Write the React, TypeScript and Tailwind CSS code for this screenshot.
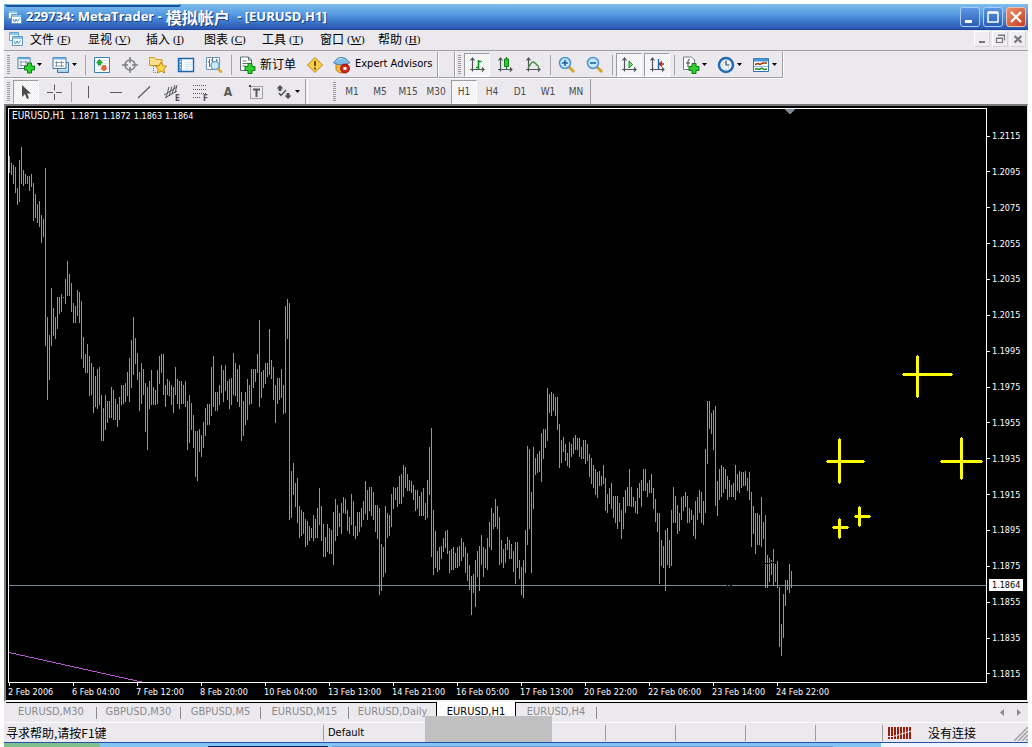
import type { ReactNode } from 'react';

type Segment = { start: number; base: number; ranges: string };

// High/low extents of every bar, in thirds of a pixel below the base row.
const segments: Segment[] = [
  {
    start: 0,
    base: 21,
    ranges:
      '78-129 99-135 105-162 111-189 174-225 90-216 51-162 120-168 132-162 138-162 138-183 132-171 159-273 192-264 222-279 213-291 255-339 267-321 114-648 561-810 615-750 474-648 534-618 561-627 501-597 501-552 492-546 501-504 447-522 393-498 432-498 459-546 519-579 528-579 480-558 486-579 513-687 621-714 672-729 642-729 678-798 699-795 711-849 738-831 717-837 711-825 795-933 834-933 795-900 813-879 813-864 771-864 780-870 807-870 822-891 801-870 765-825 765-822 759-816 726-798 684-816 630-774 561-735 624-702 669-750 726-843 699-822 717-795 759-906 771-960 753-837 720-825 771-825 780-825 720-822 678-762 672-729 672-795 765-831 747-795 753-798 765-825 771-849 711-795 747-822 753-837 753-822 765-822 753-831 813-960 795-939 819-900 855-954 903-1041 903-1053 897-966 915-981 876-954 834-918 822-885 822-885 711-858 678-831 786-843 786-843 765-825 705-789 720-816 705-783 753-810 747-837 744-825 669-795 699-798 717-816 705-831 786-933 813-918 786-885 747-870 765-825 717-822 717-774 717-756 672-729',
  },
  {
    start: 125,
    base: 171,
    ranges:
      '120-381 276-354 270-324 249-312 249-291 147-285 240-297 261-360 315-429 294-372 294-360 267-354 315-402 78-399 57-177 69-720 573-714 549-645 609-681 594-729 678-774 690-768 696-762 717-801 723-795 738-783 744-774 705-783 717-774 684-774 624-735 678-783 732-831 771-831 732-816 744-822 750-822 696-855 657-783 675-768 699-741 669-762 651-699 657-702 690-753 711-762 642-735 663-768 738-777 696-768 696-756 684-741 663-720 603-702 630-720 621-693 621-708 636-720 675-756 675-777 684-945 792-933 801-891 678-879 699-774 705-768 642-741 621-687 624-660 621-681 588-672 582-672 555-651 561-624 582-633 600-633 603-639 615-660 630-693 630-687 648-708 636-708 624-708 669-720 600-714 501-645 444-831 690-885 753-864 813-876 801-870 798-837 774-816 753-804 750-822 813-879 807-870 801-870 819-864 801-864 798-858 774-843 786-831 801-879 819-903 855-930 888-1005 882-939 840-981 813-891 798-933',
  },
  {
    start: 236,
    base: 261,
    ranges:
      '495-585 531-621 537-594 504-600 456-531 414-540 429-477 387-471 408-477 441-585 510-579 537-594 522-579 501-540 510-567 522-567 543-606 516-642 516-594 570-627 591-675 570-684 480-609 228-525 237-477 366-609 231-417 264-315 252-309 243-306 189-336 177-267 177-234 54-213 72-129 66-138 72-123 81-138 81-180 162-294 210-279 201-246 222-273 249-288 216-294 222-261 204-252 195-240 204-240 204-261 231-267 210-267 210-282 222-273 252-321 264-342 285-354 297-375 306-384 303-348 318-348 285-342 324-423 372-429 354-402 339-417 378-444 378-459 378-477 399-456 420-507 381-477 360-429 351-408 297-408 351-411 381-411 393-429 354-432 339-384 330-411 297-363 297-363 339-381 330-369 312-369 354-417 387-456 429-486 429-642 510-588 528-594 480-663 474-585 510-594 420-588 351-459 378-459 405-492 429-483 381-450 378-423 366-411 378-459 414-459 420-450 435-498 393-507 381-450 360-429 366-459 393-465 237-429 93-282 93-177 129-192 120-240 108-408 333-438 297-390 285-381 291-369 297-357 318-390 330-381 345-381 339-381 285-390 312-363 303-369 306-354 306-348 303-348 324-363 306-390 366-531 408-492 429-552 429-525 435-525 381-531 456-507 435-654 555-654 564-636 570-615 537-648 582-636 573-654 651-831 762-858 672-804 630-708 630-660 582-669 603-654',
  },
];

const barPath = segments
  .map(({ start, base, ranges }) =>
    ranges
      .split(' ')
      .map((range, i) => {
        const [top, bottom] = range.split('-').map(Number);
        return `M${(start + i) * 2} ${base + top / 3}h1v${(bottom - top) / 3}h-1z`;
      })
      .join(''),
  )
  .join('');

const crosses = [
  { x: 908, y: 265, left: 893, right: 944, top: 246, bottom: 289 },
  { x: 830, y: 352, left: 817, right: 856, top: 329, bottom: 375 },
  { x: 952, y: 352, left: 931, right: 974, top: 328, bottom: 371 },
  { x: 850, y: 407, left: 845, right: 862, top: 397, bottom: 418 },
  { x: 830, y: 418, left: 823, right: 840, top: 409, bottom: 430 },
];

const quotes = ['1.1871', '1.1872', '1.1863', '1.1864'];

const prices = [
  '1.2115', '1.2095', '1.2075', '1.2055', '1.2035', '1.2015', '1.1995', '1.1975',
  '1.1955', '1.1935', '1.1915', '1.1895', '1.1875', '1.1855', '1.1835', '1.1815',
];

const times = [
  '2 Feb 2006', '6 Feb 04:00', '7 Feb 12:00', '8 Feb 20:00', '10 Feb 04:00', '13 Feb 13:00', '14 Feb 21:00',
  '16 Feb 05:00', '17 Feb 13:00', '20 Feb 22:00', '22 Feb 06:00', '23 Feb 14:00', '24 Feb 22:00',
];

const menus = [
  ['文件', 'F'], ['显视', 'V'], ['插入', 'I'], ['图表', 'C'], ['工具', 'T'], ['窗口', 'W'], ['帮助', 'H'],
];

const frames = ['M1', 'M5', 'M15', 'M30', 'H1', 'H4', 'D1', 'W1', 'MN'];

const tabs = [
  { name: 'EURUSD,M30', width: 'w-[91px]' },
  { name: 'GBPUSD,M30', width: 'w-[84px]' },
  { name: 'GBPUSD,M5', width: 'w-[80px]' },
  { name: 'EURUSD,M15', width: 'w-[88px]' },
  { name: 'EURUSD,Daily', width: 'w-[87px]' },
  { name: 'EURUSD,H1', width: 'w-[80px]' },
  { name: 'EURUSD,H4', width: 'w-[81px]' },
];

function Svg({ children, size = 18 }: { children: ReactNode; size?: number }) {
  return (
    <svg width={size} height={size} viewBox={`0 0 ${size} ${size}`} className="shrink-0" aria-hidden="true">
      {children}
    </svg>
  );
}

const Plus = ({ x, y }: { x: number; y: number }) => (
  <path
    d={`M${x + 3} ${y}h4v3h3v4h-3v3h-4v-3h-3v-4h3z`}
    fill="#2fd02f"
    stroke="#0a7d14"
    strokeWidth="1"
  />
);

const MiniCandles = ({ x, y }: { x: number; y: number }) => (
  <path d={`M${x} ${y}v6M${x - 1.5} ${y + 1.5}h9M${x - 1.5} ${y + 5}h9M${x + 5} ${y}v6`} stroke="#6f8494" strokeWidth=".8" fill="none" />
);

const Axes = () => (
  <path d="M4.5 2v13.5M2 13.500h14M2.500 4.500l2-2.500 2 2.500M14 11.500l2 2-2 2" stroke="#505458" strokeWidth="1.200" fill="none" />
);

const icons = {
  app: (
    <Svg size={16}>
      <path d="M1.500 1.500h9v8h-9z" fill="#fff" stroke="#6aa3d0" />
      <path d="M2 3h8" stroke="#8cc6ee" strokeWidth="2" />
      <path d="M4.500 5.500h10v9h-10z" fill="#fff" stroke="#5a98c8" />
      <path d="M5 7h9" stroke="#8cc6ee" strokeWidth="2" />
      <path d="M6 10l1.500 3 1.500-3 1.500 2.500 2-3" stroke="#3b8dcc" fill="none" />
    </Svg>
  ),
  newChart: (
    <Svg>
      <path d="M1 1.500h12v11h-12z" fill="#fff" stroke="#3b78a8" />
      <path d="M1 2.500h12" stroke="#6fb2e2" strokeWidth="2" />
      <MiniCandles x={4} y={4.5} />
      <Plus x={7.5} y={7} />
    </Svg>
  ),
  profiles: (
    <Svg>
      <path d="M5.500 6.500h11v10h-11z" fill="#d5ebf9" stroke="#3b78a8" />
      <path d="M1 1.500h13v11h-13z" fill="#fff" stroke="#3b78a8" />
      <path d="M1 2.500h13" stroke="#6fb2e2" strokeWidth="2" />
      <MiniCandles x={4.5} y={5} />
      <path d="M6 15h10" stroke="#7fb8e0" />
    </Svg>
  ),
  marketWatch: (
    <Svg>
      <path d="M1.500 1.500h15v15h-15z" fill="#fff" stroke="#3982b8" />
      <path d="M3 4.500h12M3 7.500h12M3 10.500h12M3 13.500h12" stroke="#dbe4ea" />
      <path d="M6.500 3.500l3 3h-1.500v2.500h-3v-2.500H3.500z" fill="#22b52c" stroke="#0a7d14" strokeWidth=".6" />
      <path d="M11 15l-3-3h1.500V9.500h3v2.500h1.500z" fill="#f26a3c" stroke="#b9320c" strokeWidth=".6" />
    </Svg>
  ),
  target: (
    <Svg>
      <circle cx="9" cy="9" r="5" fill="none" stroke="#7c7f83" strokeWidth="1.500" />
      <path d="M9 1v6M9 11v6M1 9h6M11 9h6" stroke="#7c7f83" strokeWidth="1.500" />
    </Svg>
  ),
  navigator: (
    <Svg>
      <path d="M.5 3.500v-2h5l1.500 2h6v6H.5z" fill="#fbe089" stroke="#c99a1e" />
      <path d="M4.500 10v6.500h4" stroke="#777" strokeDasharray="1 1" fill="none" />
      <path d="M12 6l1.800 3.700 4 .5-3 2.800.8 4L12 15l-3.600 2 .8-4-3-2.800 4-.5z" fill="#ffd54a" stroke="#b98412" strokeWidth=".9" />
    </Svg>
  ),
  terminal: (
    <Svg>
      <path d="M1.500 2.500h15v13h-15z" fill="#f4faff" stroke="#1d66ad" strokeWidth="1.400" />
      <path d="M2 3h3v12H2z" fill="#5aa3e0" />
      <path d="M8 6.500h7M8 8.500h7M8 10.500h7M8 12.500h5" stroke="#d5e6f4" />
      <path d="M3 5.500h1M3 8.500h1M3 11.500h1" stroke="#fff" />
    </Svg>
  ),
  tester: (
    <Svg>
      <path d="M1.500 1.500h13v12h-13z" fill="#fff" stroke="#6a94b4" />
      <path d="M4.500 3v8M7.500 2v5M11.500 3v5M3 6h2M6 4h2M11 5h2" stroke="#5a7286" />
      <circle cx="10" cy="9.500" r="4" fill="#cde8fa" stroke="#6fa6d2" strokeWidth="1.400" />
      <path d="M13 12.500l3.500 4" stroke="#d8a52c" strokeWidth="2.500" />
    </Svg>
  ),
  newOrder: (
    <Svg>
      <path d="M2.500 1h8l3 3v10.500h-11z" fill="#fff" stroke="#5e6c78" />
      <path d="M10.500 1v3h3M4.500 5h4M4.500 7.500h7M4.500 10h3" stroke="#5e6c78" fill="none" />
      <Plus x={7} y={7.500} />
    </Svg>
  ),
  warning: (
    <Svg>
      <path d="M9 1.500L16.500 9 9 16.500 1.500 9z" fill="#f8cf45" stroke="#b8891a" strokeLinejoin="round" />
      <path d="M9 5v5M9 11.500v2" stroke="#7a4b05" strokeWidth="2" />
    </Svg>
  ),
  expert: (
    <Svg>
      <path d="M3 7h11v6c0 2-2 4-5 4s-6-2-6-4z" fill="#f5b63c" stroke="#a86c13" strokeWidth=".8" />
      <path d="M.5 6.500C3 5 3 1.500 8.500 1.500S14 5 17 6.500C13 9.500 4 9.500.5 6.500z" fill="#7fbde8" stroke="#3f82b8" />
      <path d="M5 3.500c2-1.500 4-1 5-.5" stroke="#c8e6fa" fill="none" />
      <circle cx="12" cy="12.500" r="4.500" fill="#cf2512" stroke="#861005" strokeWidth=".8" />
      <path d="M10.500 11h3v3h-3z" fill="#fff" />
    </Svg>
  ),
  bars: (
    <Svg>
      <Axes />
      <path d="M10.500 4v9M10.500 5.500h3M8 11.500h2.500" stroke="#0a9118" strokeWidth="1.600" fill="none" />
    </Svg>
  ),
  candles: (
    <Svg>
      <Axes />
      <path d="M10.500 1v12" stroke="#0a6c12" />
      <path d="M8.500 3h4v7.500h-4z" fill="#26d030" stroke="#0a7d14" />
    </Svg>
  ),
  line: (
    <Svg>
      <Axes />
      <path d="M4 12c2-2 2.500-6 5-6s3 3 6 4.500" stroke="#35913a" strokeWidth="1.300" fill="none" />
    </Svg>
  ),
  zoomIn: (
    <Svg>
      <path d="M11 11l5 5" stroke="#d4a426" strokeWidth="3" />
      <circle cx="7" cy="7" r="5.500" fill="#c5e6fb" stroke="#4a94d4" strokeWidth="1.500" />
      <path d="M4 7h6M7 4v6" stroke="#1d63ac" strokeWidth="1.600" />
    </Svg>
  ),
  zoomOut: (
    <Svg>
      <path d="M11 11l5 5" stroke="#d4a426" strokeWidth="3" />
      <circle cx="7" cy="7" r="5.500" fill="#c5e6fb" stroke="#4a94d4" strokeWidth="1.500" />
      <path d="M4 7h6" stroke="#1d63ac" strokeWidth="1.600" />
    </Svg>
  ),
  autoScroll: (
    <Svg>
      <Axes />
      <path d="M9 5l3.500 3.500L9 12z" fill="#7be082" stroke="#0a9118" />
    </Svg>
  ),
  shift: (
    <Svg>
      <Axes />
      <path d="M10.500 3v10" stroke="#1d66ad" strokeWidth="1.400" />
      <path d="M16 8h-4M14 5.500L11.500 8l2.500 2.500" stroke="#a52c0c" strokeWidth="1.500" fill="none" />
    </Svg>
  ),
  indicators: (
    <Svg>
      <path d="M4.500 3.500h8v10h-8z" fill="#fff" stroke="#6f7f8c" />
      <path d="M1.500 1h8l3 3v9.500h-11z" fill="#fff" stroke="#6f7f8c" />
      <path d="M8 4c-1.500-1-2 0-2 2v5M4 7h4" stroke="#444" fill="none" />
      <Plus x={7} y={7.500} />
    </Svg>
  ),
  clock: (
    <Svg>
      <circle cx="9" cy="9" r="7" fill="#eef7ff" stroke="#2469b4" strokeWidth="2.500" />
      <path d="M9 4.500V9h3.500" stroke="#444" strokeWidth="1.200" fill="none" />
      <path d="M5 9h.8M9 13v.8M6 6l.5.5M6 12l.5-.5M12 12l-.5-.5" stroke="#888" />
    </Svg>
  ),
  template: (
    <Svg>
      <path d="M1.500 2.500h15v13h-15z" fill="#fff" stroke="#2f75b5" />
      <path d="M2 4h14" stroke="#4a94d4" strokeWidth="3" />
      <path d="M3 8.500l3-1 2 1 3-1.500 4 0" stroke="#9c3010" strokeWidth="1.400" fill="none" />
      <path d="M2 10.500h14" stroke="#8cb8dc" />
      <path d="M3 13.500l2-1 2 1 3-1.500 2 1.500 3-.5" stroke="#218a2a" strokeWidth="1.400" fill="none" />
    </Svg>
  ),
  pointer: (
    <Svg>
      <path d="M5 2v12l3-3 2 5 2-1-2-4.500h4z" fill="#4a4a4a" />
    </Svg>
  ),
  cross: (
    <Svg>
      <path d="M9.500 1.500v6M9.500 11v6M2 9.500h6M11 9.500h6" stroke="#5a5a5a" />
    </Svg>
  ),
  vertical: (
    <Svg>
      <path d="M9.500 3v12" stroke="#5a5a5a" />
    </Svg>
  ),
  horizontal: (
    <Svg>
      <path d="M3 9.500h12" stroke="#5a5a5a" />
    </Svg>
  ),
  trend: (
    <Svg>
      <path d="M3 15L15 3.500" stroke="#5a5a5a" strokeWidth="1.200" />
    </Svg>
  ),
  channel: (
    <Svg>
      <path d="M1 12L14 4M2 15L14 8M6 4L3 15M9 3.500L6 13M12 2L9 11M14 2l-2 8" stroke="#5a5a5a" fill="none" />
      <text x="12" y="17.500" fontSize="8" fontWeight="bold" fill="#555">E</text>
    </Svg>
  ),
  fibo: (
    <Svg>
      <path d="M2 2.500h14M2 6.500h14M2 10.500h14M2 14.500h8" stroke="#5a5a5a" strokeDasharray="1 1" />
      <text x="12" y="17.500" fontSize="8" fontWeight="bold" fill="#555">F</text>
    </Svg>
  ),
  label: (
    <Svg>
      <path d="M3.500 3.500h12v12h-12z" stroke="#5a5a5a" strokeDasharray="1 1" fill="none" />
      <path d="M2 2h2v2H2z" fill="#444" />
      <path d="M6 6.500h7M9.500 6v8" stroke="#5a5a5a" strokeWidth="2" />
    </Svg>
  ),
  arrows: (
    <Svg>
      <path d="M5 2l3.500 3.500H6.500V8h-3V5.500H1.500zM13 16l-3.500-3.500h2V10h3v2.500h2z" fill="#505050" />
      <path d="M4 10l2 2.500L11 7" stroke="#505050" strokeWidth="1.400" fill="none" />
    </Svg>
  ),
};

const Caret = () => (
  <svg width="5" height="3" viewBox="0 0 5 3" className="shrink-0" aria-hidden="true">
    <path d="M0 0h5L2.500 3z" fill="#000" />
  </svg>
);

const Grip = () => (
  <span className="flex w-2 shrink-0 items-center justify-center">
    <span className="h-[19px] w-[3px] bg-[repeating-linear-gradient(#9a9a9e_0_1px,#ebe9ed_1px_2px)]" />
  </span>
);

const Divider = () => (
  <span className="flex w-1.5 shrink-0 items-center justify-center">
    <span className="h-5 w-px bg-[#a5a4a8]" />
  </span>
);

const pressedLook =
  'border border-t-[#9d9da1] border-l-[#9d9da1] border-r-white border-b-white bg-[repeating-conic-gradient(#ffffff_0_25%,#ececee_0_50%)] bg-[length:2px_2px]';

function Tool({ label, pressed = false, children }: { label: string; pressed?: boolean; children: ReactNode }) {
  return (
    <button
      aria-label={label}
      className={`mx-px flex h-6 w-[26px] shrink-0 items-center justify-center text-[10px] text-[#4a4a4a] ${pressed ? pressedLook : ''}`}
    >
      {children}
    </button>
  );
}

function DropTool({ label, children }: { label: string; children: ReactNode }) {
  return (
    <button aria-label={label} className="flex h-6 w-[35px] shrink-0 items-center justify-center gap-0.5">
      {children}
      <Caret />
    </button>
  );
}

const strip = 'flex shrink-0 items-center border-r border-b border-[#a0a0a4] shadow-[1px_1px_0_#fff]';
const sheetButton = 'size-4 border border-t-white border-r-[#d5d3d8] border-b-[#d5d3d8] border-l-white bg-[#efedf1]';

export default function App() {
  return (
    <div className="relative flex h-screen flex-col overflow-hidden bg-white px-1 pt-1 font-['DejaVu_Sans_Condensed','DejaVu_Sans','Noto_Sans_CJK_SC',sans-serif] text-[11px] text-black">
      <header className="relative flex h-[26px] shrink-0 items-center border-b border-[#1c459c] bg-linear-to-b from-[#7fc0ef] via-[#4d90dc] to-[#2a54b0] pr-0.5 pl-[3px]">
        <span className="absolute top-0 left-px h-[3px] w-44 rounded-b border-b-2 border-[#1b4f9f]" />
        {icons.app}
        <h1 className="ml-[3px] flex flex-1 items-center gap-1 font-['Open_Sans','Noto_Sans_CJK_SC',sans-serif] text-[13px] font-bold whitespace-pre text-white [text-shadow:1px_1px_0_#1c3f80]">
          229734: MetaTrader -
          <span className="font-['Noto_Sans_CJK_SC',sans-serif] text-[16px] leading-5">模拟帐户</span>
          {' - [EURUSD,H1]'}
        </h1>
        <div className="flex gap-[3px]">
          <button aria-label="Minimize" className="h-5 w-5 rounded-[3px] border border-[#a9cdf5] bg-linear-to-b from-[#5b97e2] to-[#2c5fb8]">
            <svg viewBox="0 0 18 18" aria-hidden="true"><path d="M4 12h7v3H4z" fill="#fff" /></svg>
          </button>
          <button aria-label="Maximize" className="h-5 w-5 rounded-[3px] border border-[#a9cdf5] bg-linear-to-b from-[#5b97e2] to-[#2c5fb8]">
            <svg viewBox="0 0 18 18" aria-hidden="true"><path d="M4 5h10v9H4zM4 4h10" fill="none" stroke="#fff" strokeWidth="1.500" /></svg>
          </button>
          <button aria-label="Close" className="h-5 w-5 rounded-[3px] border border-[#f0c0b0] bg-linear-to-br from-[#ec9070] to-[#c43c14]">
            <svg viewBox="0 0 18 18" aria-hidden="true"><path d="M4 4l10 10M14 4L4 14" stroke="#fff" strokeWidth="2.200" /></svg>
          </button>
        </div>
      </header>

      <nav className="flex h-[21px] shrink-0 items-center border-b border-[#a0a0a4] bg-[#ebe9ed] pr-0.5 pb-0.5 pl-1 shadow-[0_1px_0_#fff]">
        {icons.app}
        <ul className="flex flex-1">
          {menus.map(([name, key]) => (
            <li key={key} className="w-[58px]">
              <button className="flex w-full items-center gap-[3px] pl-1.5 text-[12px] leading-4 whitespace-nowrap">
                <span className="font-['Noto_Sans_CJK_SC',sans-serif]">{name}</span>
                <span className="font-['Liberation_Serif',serif] text-[11px]">
                  (<u>{key}</u>)
                </span>
              </button>
            </li>
          ))}
        </ul>
        <div className="flex gap-0.5">
          <button aria-label="Minimize chart" className={sheetButton}>
            <svg viewBox="0 0 14 14" aria-hidden="true"><path d="M4 9h6v2H4z" fill="#77777a" /></svg>
          </button>
          <button aria-label="Restore chart" className={sheetButton}>
            <svg viewBox="0 0 14 14" aria-hidden="true">
              <path d="M3.500 6.500h6v4h-6zM3 6h7M5 3.500h6.500v5M5 3h7" fill="none" stroke="#77777a" strokeWidth="1.200" />
            </svg>
          </button>
          <button aria-label="Close chart" className={sheetButton}>
            <svg viewBox="0 0 14 14" aria-hidden="true"><path d="M3.500 4l7 6.500M10.500 4l-7 6.500" stroke="#77777a" strokeWidth="2.200" /></svg>
          </button>
        </div>
      </nav>

      <div className="flex h-7 shrink-0 bg-[#ebe9ed] pt-px pb-px" role="toolbar" aria-label="Standard">
        <div className={strip}>
          <Grip />
          <DropTool label="New chart">{icons.newChart}</DropTool>
          <DropTool label="Profiles">{icons.profiles}</DropTool>
          <Divider />
          <Tool label="Market watch">{icons.marketWatch}</Tool>
          <Tool label="Data window">{icons.target}</Tool>
          <Tool label="Navigator">{icons.navigator}</Tool>
          <Tool label="Terminal">{icons.terminal}</Tool>
          <Tool label="Strategy tester">{icons.tester}</Tool>
          <Divider />
          <button className="flex h-6 w-[67px] items-center gap-1 pl-1 text-[12px] whitespace-nowrap">
            {icons.newOrder}
            新订单
          </button>
          <Tool label="Warnings">{icons.warning}</Tool>
          <button className="flex h-6 w-[108px] items-center gap-1 pl-1 whitespace-nowrap">
            {icons.expert}
            Expert Advisors
          </button>
        </div>
        <div className={`${strip} ml-px w-4`} />
        <div className={strip}>
          <Grip />
          <Tool label="Bar chart" pressed>{icons.bars}</Tool>
          <Tool label="Candlesticks">{icons.candles}</Tool>
          <Tool label="Line chart">{icons.line}</Tool>
          <Divider />
          <Tool label="Zoom in">{icons.zoomIn}</Tool>
          <Tool label="Zoom out">{icons.zoomOut}</Tool>
          <Divider />
          <Tool label="Auto scroll" pressed>{icons.autoScroll}</Tool>
          <Tool label="Chart shift" pressed>{icons.shift}</Tool>
          <Divider />
          <DropTool label="Indicators">{icons.indicators}</DropTool>
          <DropTool label="Periodicity">{icons.clock}</DropTool>
          <DropTool label="Templates">{icons.template}</DropTool>
        </div>
      </div>

      <div className="flex h-[25px] shrink-0 bg-[#ebe9ed]" role="toolbar" aria-label="Line studies and periods">
        <div className="flex shrink-0 items-center border-r border-[#a0a0a4]">
          <Grip />
          <Tool label="Cursor" pressed>{icons.pointer}</Tool>
          <Tool label="Crosshair">{icons.cross}</Tool>
          <Divider />
          <Tool label="Vertical line">{icons.vertical}</Tool>
          <Tool label="Horizontal line">{icons.horizontal}</Tool>
          <Tool label="Trendline">{icons.trend}</Tool>
          <Tool label="Channel">{icons.channel}</Tool>
          <Tool label="Fibonacci">{icons.fibo}</Tool>
          <Tool label="Text">
            <span className="text-[12px] font-bold text-[#5a5a5a]">A</span>
          </Tool>
          <Tool label="Text label">{icons.label}</Tool>
          <DropTool label="Arrows">{icons.arrows}</DropTool>
        </div>
        <div className="ml-px w-[23px] shrink-0 border-l border-white" />
        <div className="flex shrink-0 items-center border-r border-[#a0a0a4]">
          <Grip />
          {frames.map((frame) => (
            <Tool key={frame} label={frame} pressed={frame === 'H1'}>
              {frame}
            </Tool>
          ))}
        </div>
      </div>

      <main className="flex min-h-0 flex-1 flex-col border-t-2 border-r border-b-2 border-l-2 border-t-[#77777a] border-r-[#e4e2e6] border-b-[#f4f3f5] border-l-[#808084] bg-black pt-0.5 pl-0.5 text-[9px] text-white">
        <div className="flex min-h-0 flex-1">
          <div className="relative min-w-0 flex-1 overflow-hidden border border-white">
            <svg className="absolute inset-0 h-full w-full" role="img" aria-label="EURUSD hourly bars" shapeRendering="crispEdges">
              <path d="M0 476h977v1H0z" fill="#778899" />
              <path d={barPath} fill="#00ff00" />
              <path d="M718 476h1v1h-1zM721 476h2v1h-2zM755 454h6v1h-6zM761 453h4v1h-4z" fill="#000" />
              <path d="M775 0h11l-5.500 5.500z" fill="#778899" />
              <path d="M0 543.500L135 573.500" stroke="#ba55d3" />
              {crosses.map((c) => (
                <g key={`${c.x}-${c.y}`} fill="#ffff00">
                  <rect x={c.x - 1} y={c.top + 1} width="3" height={c.bottom - c.top - 2} />
                  <rect x={c.left + 1} y={c.y - 1} width={c.right - c.left - 2} height="3" />
                  <rect x={c.x} y={c.top} width="1" height={c.bottom - c.top} />
                  <rect x={c.left} y={c.y} width={c.right - c.left} height="1" />
                </g>
              ))}
            </svg>
            <p className="relative flex items-center gap-[3px] pt-px pl-[3px] leading-3">
              <span className="pr-[3px] text-[10px]">EURUSD,H1</span>
              {quotes.map((quote) => (
                <span key={quote}>{quote}</span>
              ))}
            </p>
          </div>
          <div className="relative flex w-10 shrink-0 flex-col justify-between pt-[22px] pb-[3px]">
            {prices.map((price) => (
              <span key={price} className="flex items-center gap-0.5 leading-3">
                <span className="h-px w-[3px] bg-white" />
                {price}
              </span>
            ))}
            <span className="absolute top-[471px] left-0.5 w-[34px] bg-white pl-[3px] leading-3 text-black">1.1864</span>
          </div>
        </div>
        <div className="flex h-[17px] shrink-0 pl-px">
          {times.map((time) => (
            <span key={time} className="flex w-16 shrink-0 flex-col whitespace-nowrap">
              <span className="h-[3px] w-px bg-white" />
              <span className="-ml-px leading-3">{time}</span>
            </span>
          ))}
        </div>
      </main>

      <div className="flex h-5 shrink-0 bg-[#ebe9ed] pl-0.5" role="tablist" aria-label="Charts">
        {tabs.map(({ name, width }) => {
          const active = name === 'EURUSD,H1';
          return (
            <button
              key={name}
              role="tab"
              aria-selected={active}
              className={`flex ${width} shrink-0 items-center justify-center ${
                active
                  ? 'border-x border-black bg-white text-black'
                  : 'border-t border-black text-[#8a8a8e]'
              }`}
            >
              <span className="flex-1">{name}</span>
              {!active && name !== 'EURUSD,Daily' && <span className="h-3 w-px bg-[#8a8a8e]" />}
            </button>
          );
        })}
        <div className="flex flex-1 items-center justify-end gap-[13px] border-t border-black pr-[7px]">
          <button aria-label="Scroll tabs left">
            <svg width="4" height="7" viewBox="0 0 4 7" aria-hidden="true"><path d="M4 0v7L0 3.500z" fill="#8a8a8e" /></svg>
          </button>
          <button aria-label="Scroll tabs right">
            <svg width="4" height="7" viewBox="0 0 4 7" aria-hidden="true"><path d="M0 0v7l4-3.500z" fill="#8a8a8e" /></svg>
          </button>
        </div>
      </div>

      <footer className="flex h-5 shrink-0 items-center border-t border-white bg-[#ebe9ed] text-[12px] leading-4 whitespace-nowrap">
        <span className="w-[319px] pl-0.5 font-['Noto_Sans_CJK_SC',sans-serif]">寻求帮助,请按F1键</span>
        <span className="flex-1 border-l border-[#a0a0a4] pl-1 text-[11px]">Default</span>
        <span className="h-4 w-[70px] border-l border-[#a0a0a4]" />
        <span className="h-4 w-[70px] border-l border-[#a0a0a4]" />
        <span className="h-4 w-[70px] border-l border-[#a0a0a4]" />
        <span className="h-4 w-[67px] border-l border-[#a0a0a4]" />
        <span className="flex w-[146px] items-center gap-4 border-l border-[#a0a0a4] pl-[5px]">
          <svg width="24" height="12" viewBox="0 0 24 12" aria-hidden="true">
            <path d="M0 0h2v12H0zM3 0h2v12H3zM6 0h2v12H6zM9 0h2v12H9zM12 0h2v12h-2zM15 0h2v12h-2zM18 0h2v12h-2zM21 0h2v12h-2z" fill="#981c08" />
            <path d="M0 9.500h5L23 4" stroke="#ebe9ed" fill="none" />
          </svg>
          <span className="flex-1 font-['Noto_Sans_CJK_SC',sans-serif]">没有连接</span>
          <svg width="14" height="14" viewBox="0 0 14 14" className="self-end" aria-hidden="true">
            <path d="M0 14L14 0M4 14L14 4M8 14l6-6M12 14l2-2" stroke="#a0a0a4" strokeWidth="1.500" />
          </svg>
        </span>
      </footer>

      <div className="flex h-[5px] shrink-0 border-t border-[#2450a8] bg-[#82c4f2]">
        <span className="w-24 rounded-tr bg-[#7fc08c]" />
        <span className="ml-27 h-px w-30 self-end bg-[#0b1a5c]" />
        <span className="ml-1 h-px flex-1 self-end bg-[#6f8fd8]" />
        <span className="ml-12 w-[147px] bg-[#eef5ff]" />
      </div>

      <div className="absolute bottom-[5px] left-[425px] h-[26px] w-[127px] bg-[#c0c0c0]" />
    </div>
  );
}
